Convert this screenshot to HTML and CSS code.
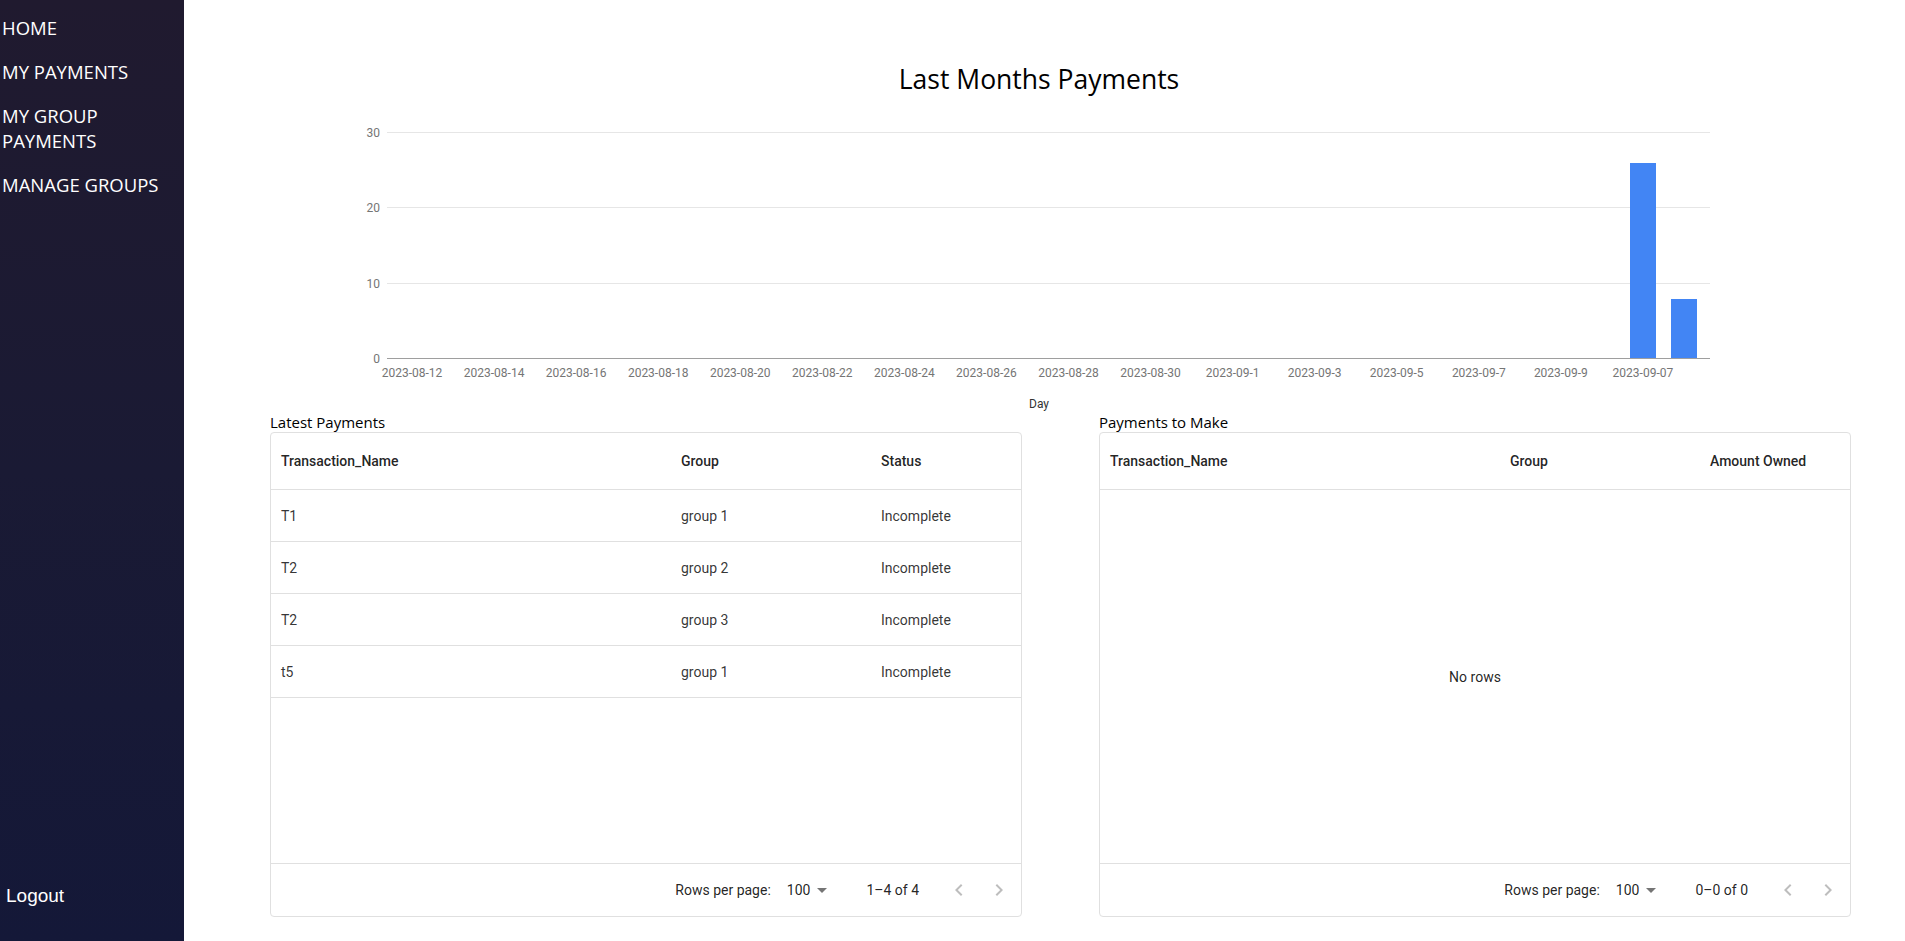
FILE: index.html
```html
<!DOCTYPE html>
<html lang="en">
<head>
<meta charset="utf-8">
<title>Payments Dashboard</title>
<link rel="stylesheet" href="styles.css">
</head>
<body>
<div class="app">
  <aside class="sidebar">
    <nav class="nav">
      <a class="nav-item" href="#">HOME</a>
      <a class="nav-item" href="#">MY PAYMENTS</a>
      <a class="nav-item" href="#">MY GROUP PAYMENTS</a>
      <a class="nav-item" href="#">MANAGE GROUPS</a>
    </nav>
    <a class="logout" href="#">Logout</a>
  </aside>

  <main class="main">
    <h1 class="title">Last Months Payments</h1>

    <svg class="chart" width="1580" height="312" viewBox="0 0 1580 312" xmlns="http://www.w3.org/2000/svg">
      <g shape-rendering="crispEdges">
        <line x1="117" y1="32.5" x2="1440" y2="32.5" stroke="#e6e6e6"/>
        <line x1="117" y1="107.5" x2="1440" y2="107.5" stroke="#e6e6e6"/>
        <line x1="117" y1="183.5" x2="1440" y2="183.5" stroke="#e6e6e6"/>
      </g>
      <g class="axis-text" text-anchor="end">
        <text x="110" y="37">30</text>
        <text x="110" y="112">20</text>
        <text x="110" y="188">10</text>
        <text x="110" y="263">0</text>
      </g>
      <g fill="#4285f4">
        <rect x="1360" y="63" width="26" height="195"/>
        <rect x="1401" y="199" width="26" height="59"/>
      </g>
      <line x1="117" y1="258.5" x2="1440" y2="258.5" stroke="#9e9e9e" shape-rendering="crispEdges"/>
      <g class="axis-text" text-anchor="middle">
        <text x="142" y="276.5">2023-08-12</text>
        <text x="224.1" y="276.5">2023-08-14</text>
        <text x="306.1" y="276.5">2023-08-16</text>
        <text x="388.2" y="276.5">2023-08-18</text>
        <text x="470.2" y="276.5">2023-08-20</text>
        <text x="552.3" y="276.5">2023-08-22</text>
        <text x="634.4" y="276.5">2023-08-24</text>
        <text x="716.4" y="276.5">2023-08-26</text>
        <text x="798.5" y="276.5">2023-08-28</text>
        <text x="880.5" y="276.5">2023-08-30</text>
        <text x="962.6" y="276.5">2023-09-1</text>
        <text x="1044.7" y="276.5">2023-09-3</text>
        <text x="1126.7" y="276.5">2023-09-5</text>
        <text x="1208.8" y="276.5">2023-09-7</text>
        <text x="1290.8" y="276.5">2023-09-9</text>
        <text x="1372.9" y="276.5">2023-09-07</text>
      </g>
      <text class="axis-title" x="769" y="308" text-anchor="middle">Day</text>
    </svg>

    <div class="tables">
      <section class="panel">
        <div class="panel-label">Latest Payments</div>
        <div class="grid">
          <div class="grid-head">
            <div class="cell col-a">Transaction_Name</div>
            <div class="cell col-b">Group</div>
            <div class="cell col-c">Status</div>
          </div>
          <div class="grid-body">
            <div class="grid-row">
              <div class="cell col-a">T1</div>
              <div class="cell col-b">group 1</div>
              <div class="cell col-c">Incomplete</div>
            </div>
            <div class="grid-row">
              <div class="cell col-a">T2</div>
              <div class="cell col-b">group 2</div>
              <div class="cell col-c">Incomplete</div>
            </div>
            <div class="grid-row">
              <div class="cell col-a">T2</div>
              <div class="cell col-b">group 3</div>
              <div class="cell col-c">Incomplete</div>
            </div>
            <div class="grid-row">
              <div class="cell col-a">t5</div>
              <div class="cell col-b">group 1</div>
              <div class="cell col-c">Incomplete</div>
            </div>
          </div>
          <div class="grid-foot">
            <span class="foot-label">Rows per page:</span>
            <span class="select">100<svg class="select-icon" viewBox="0 0 24 24" width="24" height="24"><path d="M7 10l5 5 5-5z"/></svg></span>
            <span class="foot-count">1–4 of 4</span>
            <span class="actions">
              <span class="icon-btn"><svg viewBox="0 0 24 24" width="24" height="24"><path d="M15.41 16.59L10.83 12l4.58-4.59L14 6l-6 6 6 6 1.41-1.41z"/></svg></span>
              <span class="icon-btn"><svg viewBox="0 0 24 24" width="24" height="24"><path d="M8.59 16.59L13.17 12 8.59 7.41 10 6l6 6-6 6-1.41-1.41z"/></svg></span>
            </span>
          </div>
        </div>
      </section>

      <section class="panel">
        <div class="panel-label">Payments to Make</div>
        <div class="grid">
          <div class="grid-head">
            <div class="cell col-a">Transaction_Name</div>
            <div class="cell col-b">Group</div>
            <div class="cell col-c">Amount Owned</div>
          </div>
          <div class="grid-body empty">
            <div class="no-rows">No rows</div>
          </div>
          <div class="grid-foot">
            <span class="foot-label">Rows per page:</span>
            <span class="select">100<svg class="select-icon" viewBox="0 0 24 24" width="24" height="24"><path d="M7 10l5 5 5-5z"/></svg></span>
            <span class="foot-count">0–0 of 0</span>
            <span class="actions">
              <span class="icon-btn"><svg viewBox="0 0 24 24" width="24" height="24"><path d="M15.41 16.59L10.83 12l4.58-4.59L14 6l-6 6 6 6 1.41-1.41z"/></svg></span>
              <span class="icon-btn"><svg viewBox="0 0 24 24" width="24" height="24"><path d="M8.59 16.59L13.17 12 8.59 7.41 10 6l6 6-6 6-1.41-1.41z"/></svg></span>
            </span>
          </div>
        </div>
      </section>
    </div>
  </main>
</div>
</body>
</html>
```

FILE: styles.css
```css
* { box-sizing: border-box; }

html, body {
  margin: 0;
  padding: 0;
  height: 100%;
  background: #ffffff;
  overflow: hidden;
}

body {
  font-family: "Open Sans", "Noto Sans", sans-serif;
  color: #000;
}

.app {
  display: flex;
  height: 100vh;
}

/* Sidebar */
.sidebar {
  width: 184px;
  flex: 0 0 184px;
  display: flex;
  flex-direction: column;
  justify-content: space-between;
  background: linear-gradient(180deg, #201a2f 0%, #1a1a34 50%, #141838 100%);
}

.nav {
  display: flex;
  flex-direction: column;
  gap: 19px;
  padding: 15px 2px 0 2px;
}

.nav-item {
  font-family: "Open Sans", sans-serif;
  font-size: 18.5px;
  line-height: 25px;
  color: #ffffff;
  text-decoration: none;
}

.logout {
  font-family: "Liberation Sans", Arial, sans-serif;
  font-size: 19px;
  line-height: 22px;
  color: #ffffff;
  text-decoration: none;
  padding: 0 0 34px 6px;
}

/* Main */
.main {
  flex: 1;
  padding: 63px 54px 0 86px;
  min-width: 0;
}

.title {
  margin: 0;
  font-family: "Open Sans", sans-serif;
  font-weight: 400;
  font-size: 26.5px;
  line-height: 32px;
  text-align: center;
  padding-right: 43px;
  color: #000;
}

.chart {
  display: block;
  margin-top: 5px;
}

.axis-text {
  font-family: Roboto, sans-serif;
  font-size: 12px;
  fill: #757575;
}

.axis-title {
  font-family: Roboto, sans-serif;
  font-size: 12px;
  fill: #333333;
}

/* Tables */
.tables {
  display: grid;
  grid-template-columns: 752px 752px;
  column-gap: 77px;
}

.panel-label {
  font-family: "Open Sans", sans-serif;
  font-size: 15px;
  line-height: 20px;
  color: #000;
}

.grid {
  height: 485px;
  border: 1px solid #e0e0e0;
  border-radius: 4px;
  display: flex;
  flex-direction: column;
  font-family: Roboto, sans-serif;
  font-size: 14px;
  color: rgba(0, 0, 0, 0.87);
}

.grid-head {
  height: 57px;
  flex: 0 0 57px;
  display: flex;
  align-items: center;
  border-bottom: 1px solid #e0e0e0;
  font-weight: 500;
}

.grid-body {
  flex: 1;
  display: flex;
  flex-direction: column;
}

.grid-body.empty {
  align-items: center;
  justify-content: center;
}

.grid-row {
  height: 52px;
  flex: 0 0 52px;
  display: flex;
  align-items: center;
  border-bottom: 1px solid #e0e0e0;
  color: rgba(0, 0, 0, 0.8);
}

.cell {
  padding: 0 10px;
  white-space: nowrap;
  overflow: hidden;
}

.col-a { width: 400px; flex: 0 0 400px; }
.col-b { width: 200px; flex: 0 0 200px; }
.col-c { width: 150px; flex: 0 0 150px; }

.no-rows {
  color: rgba(0, 0, 0, 0.87);
}

.grid-foot {
  height: 53px;
  flex: 0 0 53px;
  border-top: 1px solid #e0e0e0;
  display: flex;
  align-items: center;
  justify-content: flex-end;
  padding-right: 2px;
  color: rgba(0, 0, 0, 0.87);
}

.select {
  display: inline-flex;
  align-items: center;
  margin: 0 32px 0 8px;
  padding-left: 8px;
}

.select-icon {
  fill: rgba(0, 0, 0, 0.54);
}

.actions {
  display: inline-flex;
  margin-left: 20px;
}

.icon-btn {
  width: 40px;
  height: 40px;
  display: inline-flex;
  align-items: center;
  justify-content: center;
}

.icon-btn svg {
  fill: rgba(0, 0, 0, 0.26);
}
```
